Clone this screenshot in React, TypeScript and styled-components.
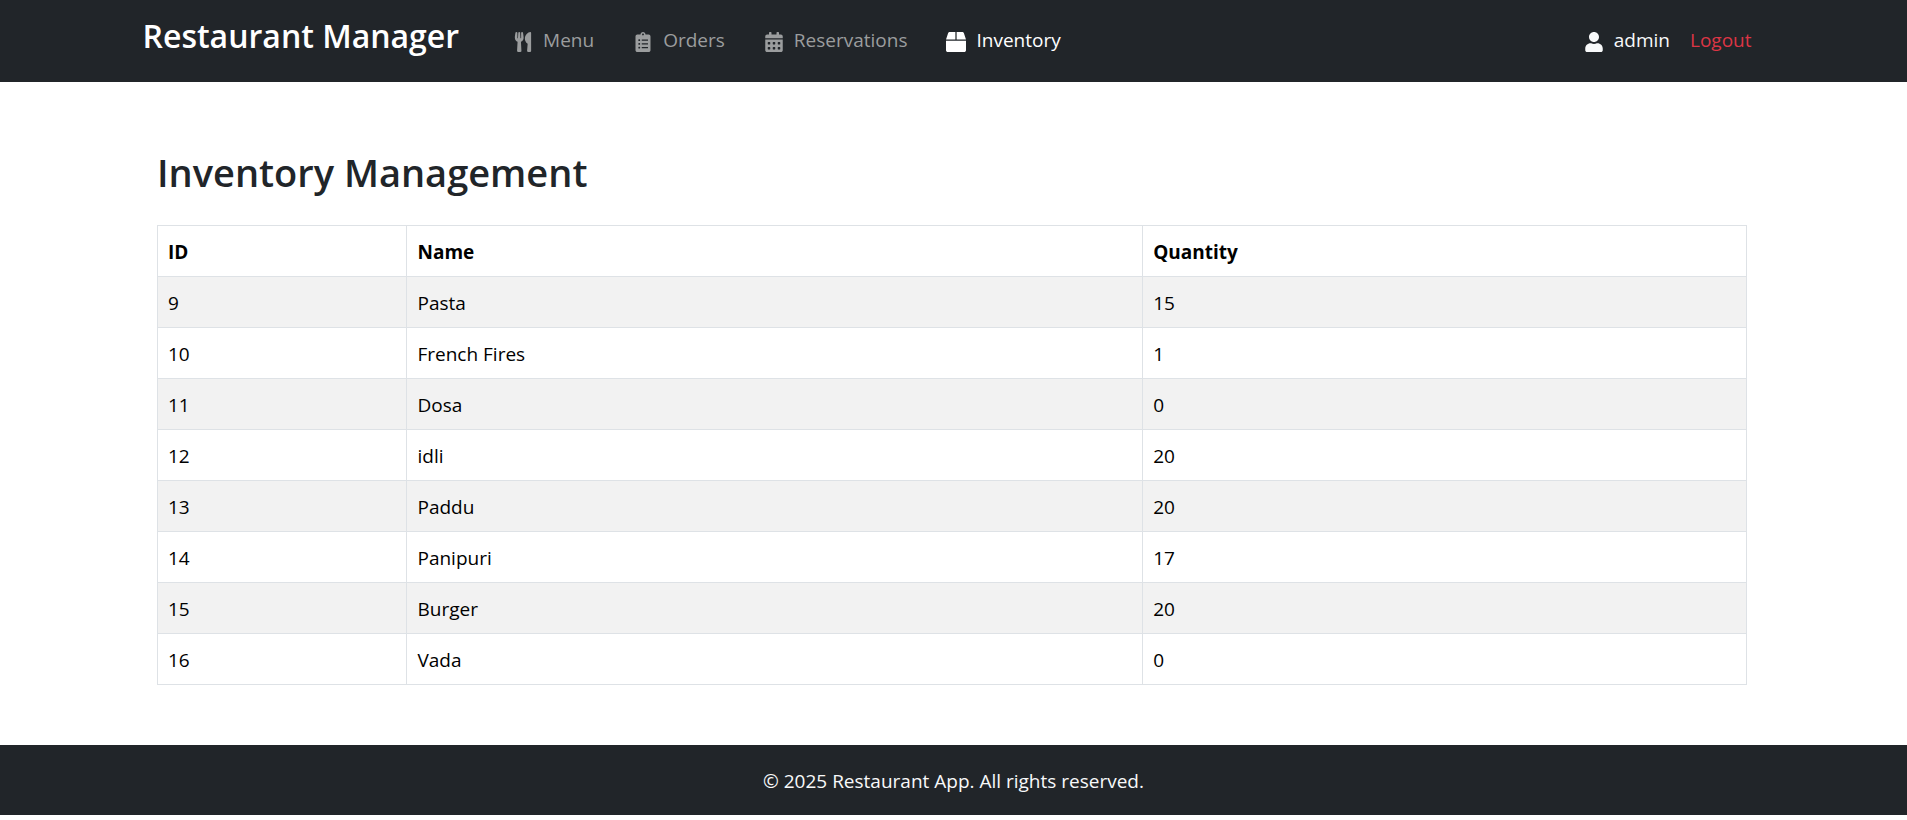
import React from "react";
import styled, { createGlobalStyle } from "styled-components";
import {
  FaBox,
  FaCalendarAlt,
  FaClipboardList,
  FaUser,
  FaUtensils,
} from "react-icons/fa";

const GlobalStyle = createGlobalStyle`
  *, *::before, *::after { box-sizing: border-box; }
  body {
    margin: 0;
    background: #fff;
    color: #212529;
    font-family: "Segoe UI", "Open Sans", "Noto Sans", sans-serif;
    font-size: 19px;
    line-height: 30px;
  }
`;

const Navbar = styled.nav`
  background: #212529;
  padding: 10px 0 12px;
`;

const Container = styled.div`
  width: 100%;
  max-width: 1652px;
  margin: 0 auto;
  padding: 0 18px 0 15px;
`;

const NavInner = styled(Container)`
  display: flex;
  align-items: center;
  height: 60px;
`;

const Brand = styled.a`
  margin: 0 54px 8px 0;
  color: #fff;
  font-size: 32px;
  font-weight: 600;
  line-height: 50px;
  text-decoration: none;
  white-space: nowrap;
`;

const NavList = styled.ul`
  display: flex;
  gap: 39px;
  margin: 0;
  padding: 0;
  list-style: none;
`;

const NavLink = styled.a<{ $active?: boolean }>`
  display: flex;
  align-items: center;
  gap: 10px;
  color: ${(p) => (p.$active ? "#fff" : "#9b9d9e")};
  text-decoration: none;

  svg {
    width: 20px;
    height: 20px;
    margin-top: 4px;
  }
`;

const Account = styled.div`
  display: flex;
  align-items: center;
  gap: 20px;
  margin-left: auto;
  padding-right: 10px;
`;

const UserName = styled.span`
  display: flex;
  align-items: center;
  gap: 10px;
  color: #f8f9fa;

  svg {
    width: 20px;
    height: 20px;
    margin-top: 4px;
  }
`;

const Logout = styled.button`
  padding: 0;
  border: 0;
  background: none;
  color: #dc3545;
  font: inherit;
  cursor: pointer;
`;

const Main = styled.main`
  width: 100%;
  max-width: 1653px;
  margin: 0 auto;
  padding: 66px 33px 60px 30px;
`;

const Title = styled.h1`
  margin: 0 0 29px;
  font-size: 38px;
  font-weight: 600;
  line-height: 48px;
`;

const Table = styled.table`
  width: 100%;
  border-collapse: collapse;
  table-layout: fixed;
  color: #000;

  th,
  td {
    height: 51px;
    padding: 11px 10px 9px;
    border: 1px solid #dee2e6;
    text-align: left;
  }

  tbody tr:nth-child(odd) {
    background: #f2f2f2;
  }
`;

const HeadCell = styled.th<{ $width?: string }>`
  width: ${(p) => p.$width ?? "auto"};
  font-weight: 700;
`;

const Footer = styled.footer`
  padding: 21px 0 19px;
  background: #212529;
  color: #f8f9fa;
  text-align: center;
`;

const links = [
  { label: "Menu", Icon: FaUtensils },
  { label: "Orders", Icon: FaClipboardList },
  { label: "Reservations", Icon: FaCalendarAlt },
  { label: "Inventory", Icon: FaBox, active: true },
];

const items = [
  { id: 9, name: "Pasta", quantity: 15 },
  { id: 10, name: "French Fires", quantity: 1 },
  { id: 11, name: "Dosa", quantity: 0 },
  { id: 12, name: "idli", quantity: 20 },
  { id: 13, name: "Paddu", quantity: 20 },
  { id: 14, name: "Panipuri", quantity: 17 },
  { id: 15, name: "Burger", quantity: 20 },
  { id: 16, name: "Vada", quantity: 0 },
];

export default function App() {
  return (
    <>
      <GlobalStyle />
      <Navbar>
        <NavInner>
          <Brand href="#">Restaurant Manager</Brand>
          <NavList>
            {links.map(({ label, Icon, active }) => (
              <li key={label}>
                <NavLink
                  href={`#${label.toLowerCase()}`}
                  $active={active}
                  aria-current={active ? "page" : undefined}
                >
                  <Icon aria-hidden />
                  {label}
                </NavLink>
              </li>
            ))}
          </NavList>
          <Account>
            <UserName>
              <FaUser aria-hidden />
              admin
            </UserName>
            <Logout type="button">Logout</Logout>
          </Account>
        </NavInner>
      </Navbar>
      <Main>
        <Title>Inventory Management</Title>
        <Table>
          <thead>
            <tr>
              <HeadCell scope="col" $width="15.7%">ID</HeadCell>
              <HeadCell scope="col" $width="46.3%">Name</HeadCell>
              <HeadCell scope="col">Quantity</HeadCell>
            </tr>
          </thead>
          <tbody>
            {items.map((item) => (
              <tr key={item.id}>
                <td>{item.id}</td>
                <td>{item.name}</td>
                <td>{item.quantity}</td>
              </tr>
            ))}
          </tbody>
        </Table>
      </Main>
      <Footer>© 2025 Restaurant App. All rights reserved.</Footer>
    </>
  );
}
